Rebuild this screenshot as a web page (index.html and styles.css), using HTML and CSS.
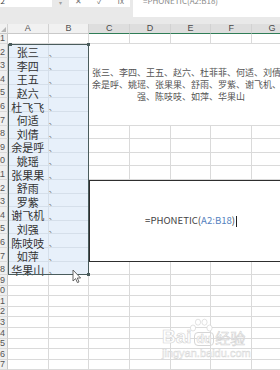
FILE: index.html
```html
<!DOCTYPE html>
<html lang="zh-CN">
<head>
<meta charset="utf-8">
<title>PHONETIC</title>
<link rel="stylesheet" href="styles.css">
</head>
<body>
<div class="app">
  <div class="topbar">
    <div class="namebox"><span class="frag nb">C12</span></div>
    <div class="drop">▾</div>
    <div class="fxbox"><span class="frag">✕</span><span class="frag">✓</span><span class="frag">fx</span></div>
    <div class="fbar"><span class="frag ftxt">=PHONETIC(A2:B18)</span></div>
  </div>

  <div class="sheet">
    <div class="sel">
      <div class="sc nm">张三</div><div class="sc dn">、</div>
      <div class="sc nm">李四</div><div class="sc dn">、</div>
      <div class="sc nm">王五</div><div class="sc dn">、</div>
      <div class="sc nm">赵六</div><div class="sc dn">、</div>
      <div class="sc nm">杜飞飞</div><div class="sc dn">、</div>
      <div class="sc nm">何适</div><div class="sc dn">、</div>
      <div class="sc nm">刘倩</div><div class="sc dn">、</div>
      <div class="sc nm">余是呼</div><div class="sc dn">、</div>
      <div class="sc nm">姚瑶</div><div class="sc dn">、</div>
      <div class="sc nm">张果果</div><div class="sc dn">、</div>
      <div class="sc nm">舒雨</div><div class="sc dn">、</div>
      <div class="sc nm">罗紫</div><div class="sc dn">、</div>
      <div class="sc nm">谢飞机</div><div class="sc dn">、</div>
      <div class="sc nm">刘强</div><div class="sc dn">、</div>
      <div class="sc nm">陈吱吱</div><div class="sc dn">、</div>
      <div class="sc nm">如萍</div><div class="sc dn">、</div>
      <div class="sc nm">华果山</div><div class="sc dn">、</div>
      <span class="hd tl"></span><span class="hd tr"></span><span class="hd br"></span>
    </div>

    <div class="m1"><span>张三、李四、王五、赵六、杜菲菲、何适、刘倩、<br>余是呼、姚瑶、张果果、舒雨、罗紫、谢飞机、刘<br>强、陈吱吱、如萍、华果山</span></div>

    <div class="m2"><span class="ftext">=PHONETIC(<span class="ref">A2:B18</span>)<span class="caret"></span></span></div>

    <div class="corner"><svg width="5" height="5" viewBox="0 0 5 5"><polygon points="5,0 5,5 0,5" fill="#b5b5b5"/></svg></div>
    <div class="ch">A</div><div class="ch">B</div><div class="ch on">C</div><div class="ch on">D</div><div class="ch on">E</div><div class="ch on">F</div><div class="ch on">G</div>

    <div class="rh">1</div><div class="c"></div><div class="c"></div><div class="c"></div><div class="c"></div><div class="c"></div><div class="c"></div><div class="c"></div>
    <div class="rh">2</div>
    <div class="rh">3</div>
    <div class="rh">4</div>
    <div class="rh">5</div>
    <div class="rh">6</div>
    <div class="rh">7</div>
    <div class="rh">8</div><div class="c"></div><div class="c"></div><div class="c"></div><div class="c"></div><div class="c"></div>
    <div class="rh">9</div><div class="c"></div><div class="c"></div><div class="c"></div><div class="c"></div><div class="c"></div>
    <div class="rh">10</div><div class="c"></div><div class="c"></div><div class="c"></div><div class="c"></div><div class="c"></div>
    <div class="rh">11</div><div class="c"></div><div class="c"></div><div class="c"></div><div class="c"></div><div class="c"></div>
    <div class="rh">12</div>
    <div class="rh">13</div>
    <div class="rh">14</div>
    <div class="rh">15</div>
    <div class="rh">16</div>
    <div class="rh">17</div>
    <div class="rh">18</div><div class="c"></div><div class="c"></div><div class="c"></div><div class="c"></div><div class="c"></div>
    <div class="rh">19</div><div class="c"></div><div class="c"></div><div class="c"></div><div class="c"></div><div class="c"></div><div class="c"></div><div class="c"></div>
    <div class="rh">20</div><div class="c"></div><div class="c"></div><div class="c"></div><div class="c"></div><div class="c"></div><div class="c"></div><div class="c"></div>
    <div class="rh">21</div><div class="c"></div><div class="c"></div><div class="c"></div><div class="c"></div><div class="c"></div><div class="c"></div><div class="c"></div>
    <div class="rh">22</div><div class="c"></div><div class="c"></div><div class="c"></div><div class="c"></div><div class="c"></div><div class="c"></div><div class="c"></div>
    <div class="rh">23</div><div class="c"></div><div class="c"></div><div class="c"></div><div class="c"></div><div class="c"></div><div class="c"></div><div class="c"></div>
    <div class="rh">24</div><div class="c"></div><div class="c"></div><div class="c"></div><div class="c"></div><div class="c"></div><div class="c"></div><div class="c"></div>
    <div class="rh">25</div><div class="c"></div><div class="c"></div><div class="c"></div><div class="c"></div><div class="c"></div><div class="c"></div><div class="c"></div>
    <div class="rh">26</div><div class="c"></div><div class="c"></div><div class="c"></div><div class="c"></div><div class="c"></div><div class="c"></div><div class="c"></div>
    <div class="rh">27</div><div class="c"></div><div class="c"></div><div class="c"></div><div class="c"></div><div class="c"></div><div class="c"></div><div class="c"></div>
    <div class="rh">28</div><div class="c"></div><div class="c"></div><div class="c"></div><div class="c"></div><div class="c"></div><div class="c"></div><div class="c"></div>
  </div>

  <div class="wm">
    <div class="wm-top">
      <span class="wm-bai">Bai</span>
      <span class="wm-logo">
        <svg class="paw" width="24" height="14" viewBox="0 0 24 14">
          <ellipse cx="4" cy="10" rx="2.6" ry="3" fill="#fff" stroke="#d6d6d6" stroke-width="0.7"/>
          <ellipse cx="9" cy="4.2" rx="2.6" ry="3" fill="#fff" stroke="#d6d6d6" stroke-width="0.7"/>
          <ellipse cx="15.5" cy="4.2" rx="2.6" ry="3" fill="#fff" stroke="#d6d6d6" stroke-width="0.7"/>
          <ellipse cx="20.5" cy="10" rx="2.6" ry="3" fill="#fff" stroke="#d6d6d6" stroke-width="0.7"/>
        </svg>
        <span class="wm-du">du</span>
      </span>
      <span class="wm-jy">经验</span>
    </div>
    <div class="wm-url">jingyan.baidu.com</div>
  </div>

  <svg class="cursor" width="10" height="15" viewBox="0 0 10 15"><path d="M1 1 L1 12 L3.6 9.6 L5.4 13.6 L7 12.9 L5.3 9 L8.6 9 Z" fill="#fff" stroke="#555" stroke-width="0.9" stroke-linejoin="round"/></svg>
</div>
</body>
</html>
```

FILE: styles.css
```css
html, body {
  margin: 0;
  padding: 0;
}
body {
  width: 280px;
  height: 370px;
  overflow: hidden;
  background: #fff;
  font-family: "Noto Sans CJK SC", "Liberation Sans", sans-serif;
}
.app {
  position: relative;
  width: 280px;
  height: 370px;
  overflow: hidden;
}

/* top toolbar fragments */
.topbar {
  height: 24px;
  background: #e9e9e9;
  display: flex;
  align-items: flex-start;
}
.namebox {
  width: 52px;
  height: 7px;
  background: #fff;
  overflow: hidden;
}
.drop {
  width: 17px;
  font-size: 6px;
  line-height: 6px;
  color: #a0a0a0;
  text-align: center;
}
.fxbox {
  width: 61px;
  height: 7px;
  background: #fff;
  overflow: hidden;
  display: flex;
  gap: 15px;
  padding-left: 6px;
  box-sizing: border-box;
}
.fbar {
  flex: 1;
  height: 17px;
  margin-left: 3px;
  background: #fff;
  overflow: hidden;
  padding-left: 10px;
}
.frag {
  display: block;
  font-size: 8px;
  line-height: 9px;
  margin-top: -4px;
  color: #777;
  white-space: nowrap;
}
.nb {
  margin-left: -9px;
  color: #444;
}
.ftxt {
  color: #8a8a8a;
}

/* sheet grid */
.sheet {
  display: grid;
  grid-template-columns: 8px repeat(7, 40.7px);
  grid-template-rows: 10px 10px repeat(17, 13.6px) repeat(10, 10.6px);
}
.c {
  border-right: 1px solid #dadada;
  border-bottom: 1px solid #dadada;
}
.rh {
  background: #efefef;
  border-right: 1px solid #c9c9c9;
  border-bottom: 1px solid #d9d9d9;
  display: flex;
  justify-content: flex-end;
  align-items: flex-end;
  overflow: hidden;
  padding-right: 2px;
  font-family: "Liberation Sans", sans-serif;
  font-size: 9px;
  line-height: 9px;
  color: #555;
  white-space: nowrap;
}
.corner,
.ch {
  background: #f1f1f1;
  border-right: 1px solid #d2d2d2;
  border-bottom: 1px solid #c9c9c9;
  display: flex;
  align-items: center;
  justify-content: center;
  font-family: "Liberation Sans", sans-serif;
  font-size: 9px;
  line-height: 9px;
  color: #555;
}
.corner {
  align-items: flex-end;
  justify-content: flex-end;
  padding: 0 1px 1px 0;
}
.ch.on {
  background: #dedede;
  border-bottom: 1px solid #2f7d57;
  color: #4a4a4a;
}

/* selected range A2:B18 */
.sel {
  grid-column: 2 / 4;
  grid-row: 3 / 20;
  position: relative;
  display: grid;
  grid-template-columns: 1fr 1fr;
  grid-template-rows: repeat(17, 1fr);
  background: #e7f0fa;
  outline: 1px solid #4a5c5c;
  outline-offset: -1px;
}
.sc {
  border-right: 1px solid #d5dfea;
  border-bottom: 1px solid #d5dfea;
  min-height: 0;
}
.nm {
  display: flex;
  justify-content: center;
  align-items: center;
  padding-top: 4px;
  font-size: 11px;
  line-height: 8px;
  color: #333;
  white-space: nowrap;
}
.dn {
  display: flex;
  align-items: flex-end;
  font-size: 8px;
  line-height: 8px;
  color: #777;
}
.hd {
  position: absolute;
  width: 3px;
  height: 3px;
  background: #4a5c5c;
}
.tl { left: 1px; top: -1px; }
.tr { right: -1px; top: -1px; }
.br { right: -1px; bottom: -1px; }

/* merged result cell C2:G7 */
.m1 {
  grid-column: 4 / 9;
  grid-row: 3 / 9;
  border-bottom: 1px solid #dadada;
  display: flex;
  align-items: center;
  justify-content: center;
  padding-top: 1px;
  text-align: center;
  font-size: 9px;
  line-height: 12px;
  color: #555;
  white-space: nowrap;
}

/* merged formula cell C12:G17 */
.m2 {
  grid-column: 4 / 9;
  grid-row: 13 / 19;
  border: 1px solid #2e2e2e;
  background: #fff;
  display: flex;
  align-items: center;
  justify-content: center;
}
.ftext {
  font-size: 9.6px;
  line-height: 11px;
  color: #444;
  white-space: nowrap;
}
.ref {
  color: #5482c0;
}
.caret {
  display: inline-block;
  width: 1px;
  height: 11px;
  background: #222;
  margin-left: 1px;
  vertical-align: middle;
}

/* watermark overlay */
.wm {
  position: absolute;
  left: 162px;
  top: 313px;
  display: flex;
  flex-direction: column;
  color: #fff;
  -webkit-text-stroke: 0.6px #d3d3d3;
}
.wm-top {
  display: flex;
  align-items: flex-end;
  height: 33px;
}
.wm-bai {
  font-family: "Liberation Sans", sans-serif;
  font-weight: bold;
  font-size: 19px;
  line-height: 19px;
}
.wm-logo {
  display: flex;
  flex-direction: column;
  align-items: center;
  margin-left: -4px;
}
.wm-du {
  display: block;
  border: 1px solid #d6d6d6;
  border-radius: 4px;
  font-family: "Liberation Sans", sans-serif;
  font-weight: bold;
  font-size: 12px;
  line-height: 12px;
  padding: 0 2px;
  margin-left: 6px;
}
.wm-jy {
  font-size: 15px;
  line-height: 16px;
  margin-left: 1px;
}
.wm-url {
  font-family: "Liberation Sans", sans-serif;
  font-size: 11px;
  line-height: 11px;
  margin-top: 2px;
  -webkit-text-stroke: 0.5px #d8d8d8;
}

.cursor {
  position: absolute;
  left: 72px;
  top: 269px;
}
```
